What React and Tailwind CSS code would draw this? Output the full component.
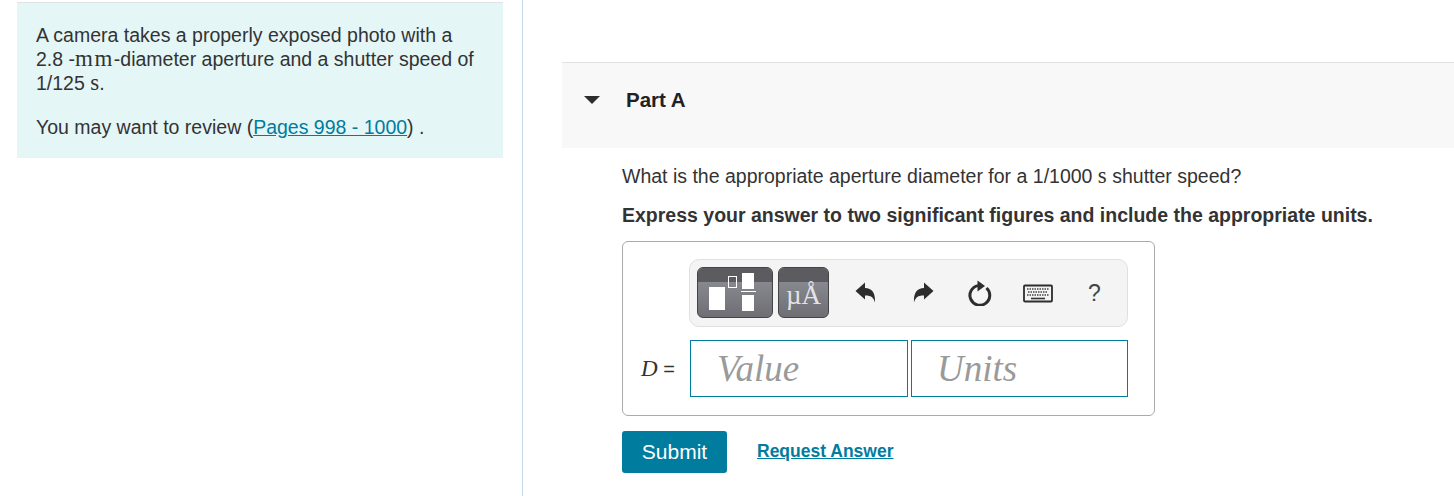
const sans = "font-['Liberation_Sans',Arial,sans-serif]";
const serif = "font-['Liberation_Serif','Times_New_Roman',serif]";

function Undo({ flip }) {
  return (
    <svg width="22" height="26" viewBox="0 0 22 26" className={flip ? '-scale-x-100' : ''}>
      <path
        d="M0.500 11 10 2.500v5.500c6.800 .3 10.500 4.500 10 14.500-1.500-5.500-4.500-7.300-10-7.100V19.500Z"
        fill="#2d2d2d"
      />
    </svg>
  );
}

function Redo() {
  return (
    <svg width="24" height="26" viewBox="0 0 24 26">
      <path d="M18.500 8A9.900 9.900 0 1 1 10 5.600" fill="none" stroke="#2d2d2d" strokeWidth="3" />
      <path d="M9.500 0.500 17 6 9.500 11.500Z" fill="#2d2d2d" />
    </svg>
  );
}

function Keyboard() {
  return (
    <svg width="30" height="19" viewBox="0 0 30 19">
      <rect x="1" y="1.500" width="28" height="16" rx="1" fill="none" stroke="#2d2d2d" strokeWidth="1.800" />
      <path d="M4 5h22" stroke="#444" strokeWidth="1.600" strokeDasharray="1.500 1" fill="none" />
      <path d="M5 8h20" stroke="#444" strokeWidth="1.600" strokeDasharray="1.500 1" fill="none" />
      <path d="M4 11h22" stroke="#444" strokeWidth="1.600" strokeDasharray="1.500 1" fill="none" />
      <path d="M8 14.500h14" stroke="#333" strokeWidth="1.600" fill="none" />
    </svg>
  );
}

function ToolButton({ width, children }) {
  return (
    <div className={`${width} relative h-[51px] overflow-hidden rounded-[6px] border border-[#444] bg-gradient-to-b from-[#92929a] to-[#6e6e74]`}>
      <div className="h-[14px] bg-[#5c5c60]" />
      {children}
    </div>
  );
}

export default function App() {
  return (
    <div className={`${sans} flex h-[496px] w-[1454px] overflow-hidden bg-white text-[19.5px] leading-[24px] text-[#333]`}>
      {/* Intro column */}
      <div className="w-[523px] shrink-0 border-r border-[#c5d9e8] pl-[17px] pr-[19px] pt-[2px]">
        <div className="h-[156px] border-t border-[#dfe3e6] bg-[#e5f6f7] pl-[19px] pt-[20px]">
          <p>
            A camera takes a properly exposed photo with a
            <br />
            2.8 -<span className={`${serif} text-[23px] font-medium tracking-[1.500px]`}>mm</span>-diameter aperture and a shutter speed of
            <br />
            1/125 <span className={`${serif} text-[23px]`}>s</span>.
          </p>
          <p className="mt-[20px]">
            You may want to review (<a className="text-[#007c9e] underline">Pages 998 - 1000</a>) .
          </p>
        </div>
      </div>

      {/* Part A */}
      <div className="flex-1 pl-[39px] pt-[62px]">
        <div className="flex h-[86px] items-center border-t border-[#e2e2e2] bg-[#f8f8f8] pb-[12px]">
          <div className="ml-[22px] h-0 w-0 border-x-[8px] border-t-[8px] border-x-transparent border-t-[#2d2d2d]" />
          <h2 className="ml-[26px] text-[20.500px] font-bold text-[#222]">Part A</h2>
        </div>

        <div className="pl-[60px]">
          <p className="mt-[16px]">
            What is the appropriate aperture diameter for a 1/1000 <span className={`${serif} text-[23px]`}>s</span> shutter speed?
          </p>
          <p className="mt-[15px] font-bold">Express your answer to two significant figures and include the appropriate units.</p>

          <div className="mt-[14px] h-[175px] w-[533px] rounded-[6px] border border-[#aaa] pl-[66px] pt-[17px]">
            <div className="flex h-[68px] w-[439px] items-center rounded-[10px] border border-[#e0e0e0] bg-[#f4f4f4] pl-[7px]">
              <ToolButton width="-mt-[1px] w-[76px]">
                <div className="absolute left-[11px] top-[19px] h-[23px] w-[16px] bg-white" />
                <div className="absolute left-[30px] top-[8px] h-[12px] w-[9px] border border-white" />
                <div className="absolute left-[44px] top-[5px] h-[16px] w-[12px] bg-white" />
                <div className="absolute left-[43px] top-[23px] h-[1px] w-[15px] bg-white" />
                <div className="absolute left-[44px] top-[27px] h-[16px] w-[12px] bg-white" />
              </ToolButton>
              <ToolButton width="-mt-[1px] ml-[5px] w-[51px]">
                <span className={`${serif} absolute inset-x-0 top-[11px] text-center text-[27px] leading-[32px] text-[#e4e4e4]`}>µÅ</span>
              </ToolButton>
              <div className="ml-[26px] flex items-center">
                <Undo />
                <div className="ml-[35px]"><Undo flip /></div>
                <div className="ml-[34px]"><Redo /></div>
                <div className="ml-[31px]"><Keyboard /></div>
                <span className="ml-[35px] text-[23px] text-[#444]">?</span>
              </div>
            </div>

            <div className="-ml-[48px] mt-[13px] flex items-center">
              <span className="w-[49px] text-[20px] text-[#333]">
                <span className={`${serif} text-[23px] italic`}>D</span> =
              </span>
              <div className={`${serif} flex h-[57px] w-[218px] items-center border border-[#007c9e] pl-[26px] text-[37px] italic leading-[36px] text-[#9a9a9a]`}>Value</div>
              <div className={`${serif} ml-[3px] flex h-[57px] w-[217px] items-center border border-[#007c9e] pl-[25px] text-[37px] italic leading-[36px] text-[#9a9a9a]`}>Units</div>
            </div>
          </div>

          <div className="mt-[15px] flex items-center">
            <button className="h-[42px] w-[105px] rounded-[3px] bg-[#007c9e] text-[21px] text-[#fff]">Submit</button>
            <a className="mb-[2px] ml-[30px] text-[17.500px] font-bold text-[#007c9e] underline">Request Answer</a>
          </div>
        </div>
      </div>
    </div>
  );
}
